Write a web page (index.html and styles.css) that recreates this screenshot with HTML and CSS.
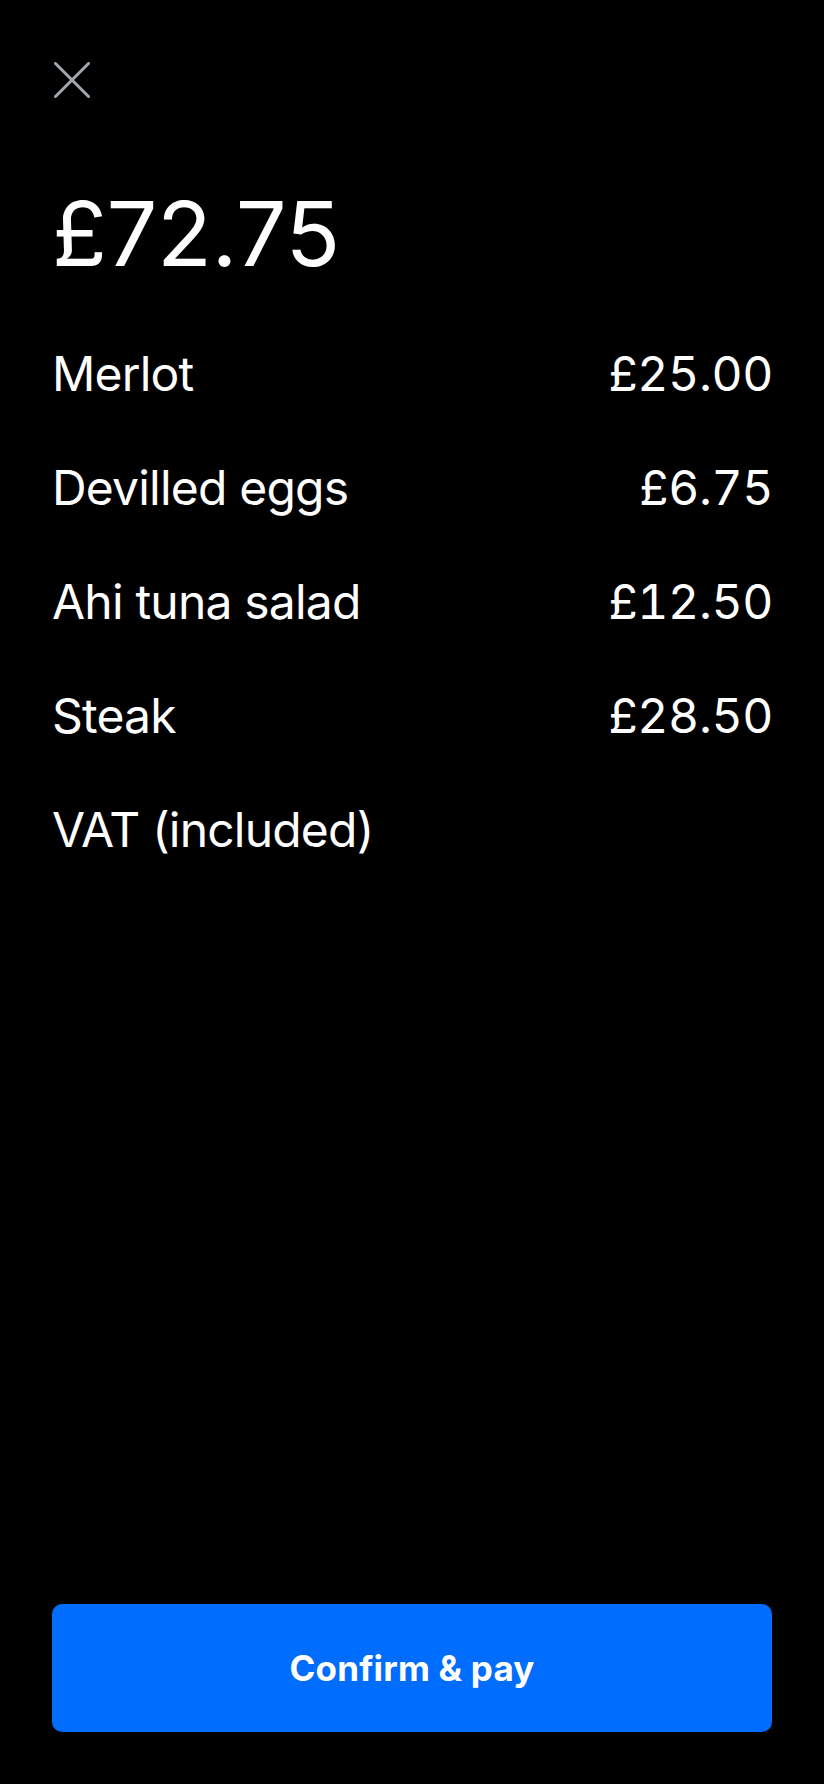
FILE: index.html
```html
<!DOCTYPE html>
<html lang="en">
<head>
<meta charset="utf-8">
<title>Confirm & pay</title>
<link rel="stylesheet" href="styles.css">
</head>
<body>
<main class="screen">
  <button class="close" aria-label="Close">
    <svg viewBox="0 0 36 36" width="36" height="36" aria-hidden="true">
      <path d="M1.5 1.5 L34.5 34.5 M34.5 1.5 L1.5 34.5" stroke="#a1a6ab" stroke-width="3" stroke-linecap="round" fill="none"/>
    </svg>
  </button>
  <h1 class="total">£72.75</h1>
  <ul class="items">
    <li class="item"><span class="label">Merlot</span><span class="price">£25.00</span></li>
    <li class="item"><span class="label">Devilled eggs</span><span class="price">£6.75</span></li>
    <li class="item"><span class="label">Ahi tuna salad</span><span class="price">£12.50</span></li>
    <li class="item"><span class="label">Steak</span><span class="price">£28.50</span></li>
    <li class="item"><span class="label">VAT (included)</span><span class="price"></span></li>
  </ul>
  <button class="pay">Confirm &amp; pay</button>
</main>
</body>
</html>
```
FILE: styles.css
```css
* { box-sizing: border-box; }
html, body {
  margin: 0;
  background: #000;
}
body {
  font-family: Inter, "Noto Sans", sans-serif;
  color: #fff;
}
.screen {
  height: 1784px;
  display: flex;
  flex-direction: column;
  padding: 62px 52px 52px;
}
.close {
  width: 36px;
  height: 36px;
  margin: 0 0 0 2px;
  padding: 0;
  border: 0;
  background: none;
  display: block;
}
.close svg { display: block; }
.total {
  margin: 91px 0 0;
  font-size: 90px;
  line-height: 90px;
  font-weight: 400;
  letter-spacing: -0.4px;
}
.items {
  list-style: none;
  margin: 38px 0 0;
  padding: 0;
}
.item {
  display: flex;
  justify-content: space-between;
  font-size: 48px;
  line-height: 114px;
}
.label { letter-spacing: -0.8px; }
.price {
  letter-spacing: -0.35px;
  margin-right: -1px;
  font-variant-numeric: tabular-nums;
}
.pay {
  margin-top: auto;
  height: 128px;
  width: 100%;
  border: 0;
  border-radius: 10px;
  background: #006dff;
  color: #fff;
  font-family: Inter, "Noto Sans", sans-serif;
  font-size: 35px;
  font-weight: 700;
  letter-spacing: 0.2px;
}
```
